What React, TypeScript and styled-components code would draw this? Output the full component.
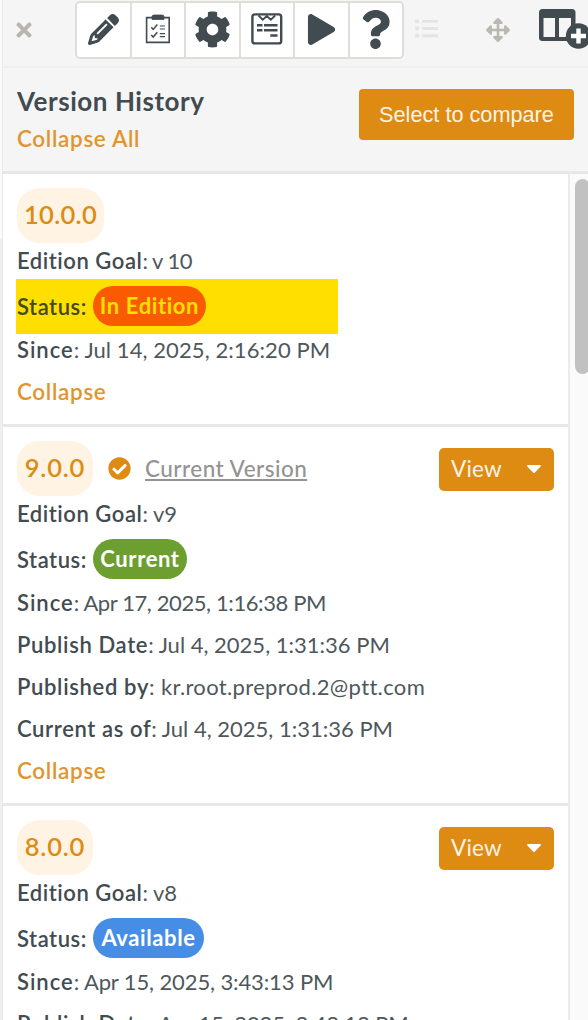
import React from "react";
import styled, { createGlobalStyle } from "styled-components";
import { FaCog, FaPlay, FaQuestion, FaTimes, FaArrowsAlt, FaListUl, FaCheckCircle, FaCaretDown } from "react-icons/fa";
import { FaPencil } from "react-icons/fa6";

const ink = "#414b50";
const orange = "#dd8b12";

const GlobalStyle = createGlobalStyle`
  * { box-sizing: border-box; }
  body { margin: 0; background: #fff; overflow: hidden; font-family: Lato, "Liberation Sans", sans-serif; color: ${ink}; font-variant-ligatures: none; }
  button { font: inherit; color: inherit; border: 0; background: none; padding: 0; margin: 0; }
  svg { display: block; flex: none; }
`;

const Page = styled.div`
  height: 1020px;
  width: 588px;
  overflow: hidden;
  display: flex;
  background: #fff;
`;

const Gutter = styled.div`
  width: 3px;
  flex: none;
  background: linear-gradient(#fafafa 239px, #efefef 239px);
  border-right: 1px solid #e9e9e9;
`;

const Panel = styled.main`
  flex: 1;
  min-width: 0;
  display: flex;
  flex-direction: column;
`;

const Toolbar = styled.div`
  height: 68px;
  flex: none;
  display: flex;
  align-items: flex-start;
  background: #f5f5f5;
  border-bottom: 2px solid #efefef;
`;

const ToolIcon = styled.span<{ $left: number; $top: number; $color: string }>`
  flex: none;
  margin-left: ${(p) => p.$left}px;
  margin-top: ${(p) => p.$top}px;
  color: ${(p) => p.$color};
`;

const ToolGroup = styled.div`
  display: flex;
  flex: none;
  width: 329px;
  height: 58px;
  margin: 1px 0 0 40px;
  border: 2px solid #dfddda;
  border-radius: 5px;
  background: #fff;
`;

const ToolButton = styled.button`
  flex: 1;
  display: flex;
  align-items: center;
  justify-content: center;
  padding-bottom: 2px;
  & + & { border-left: 2px solid #e0dedb; }
`;

const Header = styled.header`
  height: 106px;
  flex: none;
  display: flex;
  justify-content: space-between;
  padding: 15px 14px 0 14px;
  background: #f5f5f5;
  border-bottom: 3px solid #e7e7e7;
`;

const Title = styled.h1`
  margin: 0;
  font-size: 26px;
  line-height: 36px;
  font-weight: 700;
  letter-spacing: 0.55px;
`;

const LinkText = styled.button<{ $height?: number }>`
  display: block;
  height: ${(p) => p.$height ?? 42}px;
  line-height: ${(p) => p.$height ?? 42}px;
  font-size: 22.5px;
  font-weight: 600;
  color: #e0952f;
  letter-spacing: 0.65px;
`;

const CompareButton = styled.button`
  width: 215px;
  height: 51px;
  margin-top: 6px;
  border-radius: 4px;
  background: ${orange};
  color: #fdf3e6;
  font-family: "Liberation Sans", sans-serif;
  font-size: 21.7px;
`;

const Body = styled.div`
  flex: 1;
  min-height: 0;
  display: flex;
`;

const List = styled.div`
  width: 567px;
  overflow: hidden;
  border-right: 2px solid #ebebeb;
`;

const Track = styled.div`
  flex: 1;
  overflow: hidden;
  padding: 5px 0 0 5px;
  background: #fafafa;
`;

const Thumb = styled.div`
  width: 15px;
  height: 195px;
  border-radius: 8px;
  background: #c1c1c1;
`;

const Card = styled.section`
  padding: 14px 14px 11px 14px;
  border-bottom: 3px solid #e8e8e8;
`;

const CardHead = styled.div`
  display: flex;
  align-items: center;
  height: 55px;
`;

const Version = styled.span<{ $width: number; $ls: number }>`
  width: ${(p) => p.$width}px;
  height: 55px;
  line-height: 53px;
  border-radius: 22px;
  background: #fff3e4;
  color: ${orange};
  text-align: center;
  font-size: 25.5px;
  font-weight: 600;
  letter-spacing: ${(p) => p.$ls}px;
`;

const CurrentMark = styled.span`
  display: flex;
  align-items: center;
  gap: 14px;
  margin-left: 15px;
  color: ${orange};
`;

const CurrentLink = styled.span`
  font-size: 22.5px;
  font-weight: 500;
  color: #939393;
  letter-spacing: 0.47px;
  text-decoration: underline;
  text-decoration-thickness: 2px;
  text-underline-offset: 2px;
`;

const ViewButton = styled.button`
  display: flex;
  align-items: center;
  justify-content: space-between;
  width: 115px;
  height: 43px;
  margin: 1px 0 0 auto;
  padding: 0 8px 2px 12px;
  border-radius: 5px;
  background: ${orange};
  color: #fdf3e6;
  font-size: 22.5px;
  letter-spacing: 0.2px;
`;

const Line = styled.div<{ $height?: number }>`
  height: ${(p) => p.$height ?? 42}px;
  line-height: ${(p) => p.$height ?? 42}px;
  font-size: 22px;
  white-space: pre;
`;

const Label = styled.span<{ $ls: number }>`
  font-weight: 600;
  letter-spacing: ${(p) => p.$ls}px;
`;

const Value = styled.span<{ $ls: number }>`
  color: #4e585c;
  letter-spacing: ${(p) => p.$ls}px;
`;

const StatusLine = styled.div<{ $marked?: boolean }>`
  display: flex;
  align-items: center;
  width: 322px;
  height: 55px;
  margin: 0 0 -5px -1px;
  padding: 0 0 1px 1px;
  font-size: 22px;
  white-space: pre;
  background: ${(p) => (p.$marked ? "#ffdf00" : "transparent")};
  color: ${(p) => (p.$marked ? "#42491a" : ink)};
`;

const Badge = styled.span<{ $bg: string; $fg: string; $width: number }>`
  width: ${(p) => p.$width}px;
  height: 40px;
  line-height: 39px;
  border-radius: 20px;
  background: ${(p) => p.$bg};
  color: ${(p) => p.$fg};
  text-align: center;
  font-weight: 700;
  letter-spacing: 0.6px;
`;

const StatusLabel = styled(Label)`
  width: 76px;
`;

const ClipboardIcon = () => (
  <svg width="26" height="30" viewBox="0 0 26 30" fill="none" stroke={ink}>
    <path d="M1.6 3.6H24.2V28.4H1.6Z" strokeWidth="1.6" />
    <path d="M7 5.5V2.3Q7 1.2 9 1H17Q19 1.2 19 2.3V5.5Z" fill={ink} strokeWidth="0.8" />
    <path d="M6.3 13.3 8.2 15.4 12.3 10.5M6.3 21 8.2 23.1 12.3 18.2" strokeWidth="1.5" />
    <path d="M14.8 12H20M14.8 15H20M14.8 19.7H20M14.8 22.7H20" strokeWidth="1.2" />
  </svg>
);

const FormIcon = () => (
  <svg width="32" height="32" viewBox="0 0 32 32" fill="none" stroke={ink}>
    <rect x="1.4" y="1.4" width="28.8" height="29" rx="2.5" strokeWidth="2.4" />
    <path d="M7.5 2.5 11.8 6.7 15.8 3 19.8 6.7 24.2 2.5" strokeWidth="1.8" />
    <path d="M6 12.3H11.5M13 12.3H26.5M6 17.3H11.5M13 17.3H26.5M19.3 22.5H26.5" strokeWidth="2.5" />
  </svg>
);

const AddColumnIcon = () => (
  <svg width="49" height="42" viewBox="0 0 49 42">
    <path fillRule="evenodd" fill={ink} d="M3.5 0H33Q36.5 0 36.5 3.5V29Q36.5 32 33 32H3.5Q0 32 0 29V3.5Q0 0 3.5 0ZM4.5 9V28H16V9ZM20 9V28H32V9Z" />
    <circle cx="39.5" cy="27" r="12.7" fill={ink} />
    <path d="M39.5 19.5V34.5M32 27H47" stroke="#fff" strokeWidth="4.4" />
  </svg>
);

type Field = { label: string; value: string; ls: number; vls: number };
type Entry = {
  version: string;
  pill: number;
  pillSpacing: number;
  goal: string;
  goalSpacing: number;
  status: string;
  bg: string;
  fg: string;
  badge: number;
  marked?: boolean;
  current?: boolean;
  view?: boolean;
  fields: Field[];
};

const entries: Entry[] = [
  {
    version: "10.0.0", pill: 87, pillSpacing: 0.3, goal: "v 10", goalSpacing: -0.5,
    status: "In Edition", bg: "#fb5b00", fg: "#ffdf00", badge: 113, marked: true,
    fields: [{ label: "Since", value: "Jul 14, 2025, 2:16:20 PM", ls: 1, vls: 0.08 }],
  },
  {
    version: "9.0.0", pill: 76, pillSpacing: 0.8, goal: "v9", goalSpacing: 0,
    status: "Current", bg: "#6c9f30", fg: "#fff", badge: 94, current: true, view: true,
    fields: [
      { label: "Since", value: "Apr 17, 2025, 1:16:38 PM", ls: 1, vls: -0.4 },
      { label: "Publish Date", value: "Jul 4, 2025, 1:31:36 PM", ls: 0.65, vls: 0 },
      { label: "Published by", value: "kr.root.preprod.2@ptt.com", ls: 0.67, vls: 0.35 },
      { label: "Current as of", value: "Jul 4, 2025, 1:31:36 PM", ls: 0.62, vls: 0 },
    ],
  },
  {
    version: "8.0.0", pill: 76, pillSpacing: 0.8, goal: "v8", goalSpacing: 0,
    status: "Available", bg: "#468ee5", fg: "#fff", badge: 111, view: true,
    fields: [
      { label: "Since", value: "Apr 15, 2025, 3:43:13 PM", ls: 1, vls: -0.12 },
      { label: "Publish Date", value: "Apr 15, 2025, 3:43:13 PM", ls: 0.65, vls: -0.08 },
    ],
  },
];

function VersionCard({ entry }: { entry: Entry }) {
  return (
    <Card>
      <CardHead>
        <Version $width={entry.pill} $ls={entry.pillSpacing}>{entry.version}</Version>
        {entry.current && (
          <CurrentMark>
            <FaCheckCircle size={23} />
            <CurrentLink>Current Version</CurrentLink>
          </CurrentMark>
        )}
        {entry.view && (
          <ViewButton>
            View
            <FaCaretDown size={24} color="#fff" />
          </ViewButton>
        )}
      </CardHead>
      <Line $height={36}>
        <Label $ls={0.55}>Edition Goal</Label>
        <Value $ls={entry.goalSpacing}>: {entry.goal}</Value>
      </Line>
      <StatusLine $marked={entry.marked}>
        <StatusLabel $ls={0.55}>Status:</StatusLabel>
        <Badge $bg={entry.bg} $fg={entry.fg} $width={entry.badge}>{entry.status}</Badge>
      </StatusLine>
      {entry.fields.map((f) => (
        <Line key={f.label}>
          <Label $ls={f.ls}>{f.label}</Label>
          <Value $ls={f.vls}>: {f.value}</Value>
        </Line>
      ))}
      <LinkText>Collapse</LinkText>
    </Card>
  );
}

export default function App() {
  return (
    <Page>
      <GlobalStyle />
      <Gutter />
      <Panel>
        <Toolbar>
          <ToolIcon $left={10} $top={19} $color="#b9b6b0"><FaTimes size={22} /></ToolIcon>
          <ToolGroup>
            <ToolButton><FaPencil size={31} color={ink} /></ToolButton>
            <ToolButton><ClipboardIcon /></ToolButton>
            <ToolButton><FaCog size={37} color={ink} /></ToolButton>
            <ToolButton><FormIcon /></ToolButton>
            <ToolButton><FaPlay size={31} color={ink} /></ToolButton>
            <ToolButton><FaQuestion size={39} color={ink} /></ToolButton>
          </ToolGroup>
          <ToolIcon $left={11} $top={17} $color="#e4e4e4"><FaListUl size={23} /></ToolIcon>
          <ToolIcon $left={48} $top={18} $color="#bbb8b1"><FaArrowsAlt size={24} /></ToolIcon>
          <ToolIcon $left={29} $top={9} $color={ink}><AddColumnIcon /></ToolIcon>
        </Toolbar>
        <Header>
          <div>
            <Title>Version History</Title>
            <LinkText $height={40}>Collapse All</LinkText>
          </div>
          <CompareButton>Select to compare</CompareButton>
        </Header>
        <Body>
          <List>
            {entries.map((e) => <VersionCard key={e.version} entry={e} />)}
          </List>
          <Track><Thumb /></Track>
        </Body>
      </Panel>
    </Page>
  );
}
